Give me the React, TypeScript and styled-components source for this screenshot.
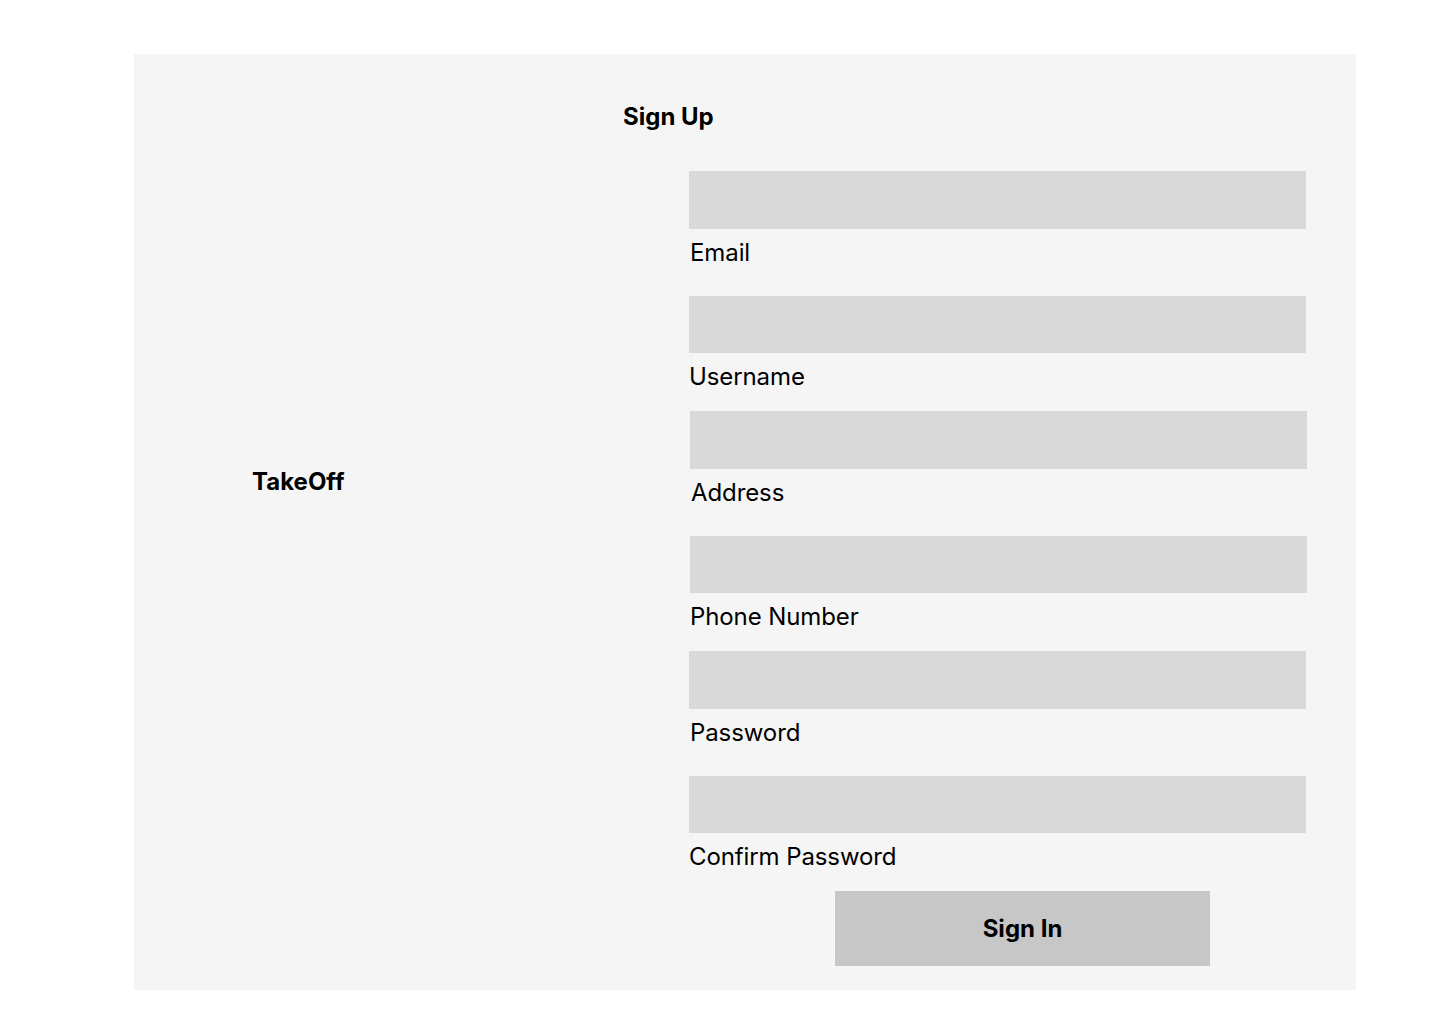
import React from "react";
import styled, { createGlobalStyle } from "styled-components";

const Global = createGlobalStyle`
  html, body { margin: 0; padding: 0; background: #ffffff; }
  body { font-family: "Inter", "Liberation Sans", sans-serif; color: #000; }
  * { box-sizing: border-box; }
`;

const Page = styled.div`
  padding: 54px 0 0 134px;
  width: 1440px;
  height: 1024px;
`;

const Panel = styled.main`
  width: 1222px;
  height: 936px;
  background: #f5f5f5;
  padding-top: 48px;
  display: flex;
  flex-direction: column;
`;

const Title = styled.h1`
  margin: 0 0 0 489px;
  font-size: 24px;
  font-weight: 700;
  line-height: 29px;
  height: 29px;
`;

const Body = styled.div`
  margin-top: 40px;
  display: grid;
  grid-template-columns: 555px 617px;
`;

const Brand = styled.div`
  padding: 296px 0 0 118px;
  font-size: 24px;
  font-weight: 700;
  line-height: 29px;
`;

const Form = styled.form`
  display: flex;
  flex-direction: column;
`;

const Field = styled.label<{ $shift: number; $after: number }>`
  display: flex;
  flex-direction: column;
  gap: 9px;
  margin-left: ${(p) => p.$shift}px;
  margin-bottom: ${(p) => p.$after}px;
`;

const Input = styled.input<{ $h: number }>`
  display: block;
  width: 617px;
  height: ${(p) => p.$h}px;
  border: none;
  outline: none;
  background: #d9d9d9;
  padding: 0 12px;
  font: inherit;
  font-size: 20px;
`;

const LabelText = styled.span<{ $shift: number }>`
  font-size: 24px;
  font-weight: 400;
  line-height: 29px;
  letter-spacing: -0.1px;
  margin-left: ${(p) => p.$shift}px;
`;

const Button = styled.button`
  margin-left: 146px;
  width: 375px;
  height: 75px;
  border: none;
  background: #c7c7c7;
  font-family: "Inter", "Liberation Sans", sans-serif;
  font-size: 24px;
  font-weight: 700;
  color: #000;
  cursor: pointer;
`;

const fields = [
  { label: "Email", type: "email", shift: 0, labelShift: 1, after: 29, h: 58 },
  { label: "Username", type: "text", shift: 0, labelShift: 0, after: 20, h: 57 },
  { label: "Address", type: "text", shift: 1, labelShift: 1, after: 29, h: 58 },
  { label: "Phone Number", type: "tel", shift: 1, labelShift: 0, after: 20, h: 57 },
  { label: "Password", type: "password", shift: 0, labelShift: 1, after: 29, h: 58 },
  { label: "Confirm Password", type: "password", shift: 0, labelShift: 0, after: 20, h: 57 },
];

export default function App() {
  return (
    <>
      <Global />
      <Page>
        <Panel>
          <Title>Sign Up</Title>
          <Body>
            <Brand>TakeOff</Brand>
            <Form onSubmit={(e) => e.preventDefault()}>
              {fields.map((f) => (
                <Field key={f.label} $shift={f.shift} $after={f.after}>
                  <Input type={f.type} $h={f.h} />
                  <LabelText $shift={f.labelShift}>{f.label}</LabelText>
                </Field>
              ))}
              <Button type="submit">Sign In</Button>
            </Form>
          </Body>
        </Panel>
      </Page>
    </>
  );
}
